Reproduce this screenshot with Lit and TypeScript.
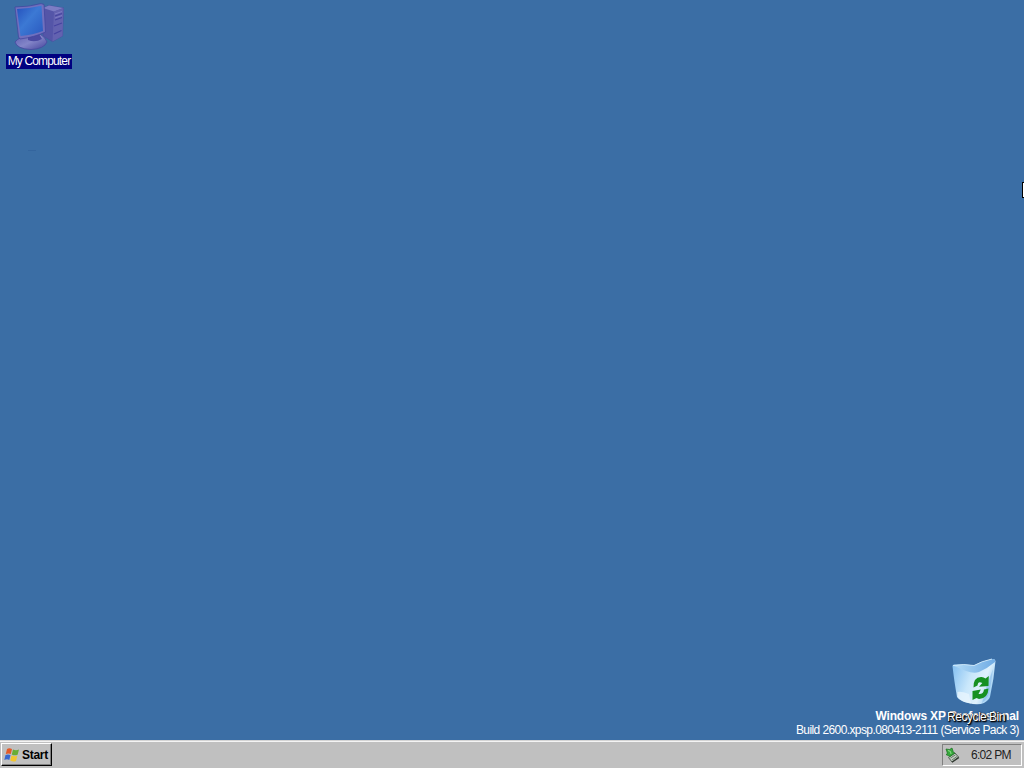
import {LitElement, html, css} from 'lit';
import {customElement, property} from 'lit/decorators.js';

@customElement('computer-icon')
export class ComputerIcon extends LitElement {
  static override styles = css`
    :host, svg {
      display: block;
      width: 50px;
      height: 48px;
    }
  `;

  override render() {
    return html`
      <svg viewBox="0 0 50 48">
        <defs>
          <linearGradient id="screen" x1="0" y1="0" x2="1" y2="1">
            <stop offset="0" stop-color="#2450bd" />
            <stop offset=".45" stop-color="#3c79d4" />
            <stop offset="1" stop-color="#2a59c0" />
          </linearGradient>
          <linearGradient id="base" x1="0" y1="0" x2="1" y2="1">
            <stop offset="0" stop-color="#5a5cb0" />
            <stop offset=".5" stop-color="#8385c8" />
            <stop offset="1" stop-color="#43439b" />
          </linearGradient>
        </defs>
        <path d="M29 5 L35 2.500 L49.500 5 L48.500 33 L38.500 38.500 L29 33Z" fill="#5455a8" stroke="#4a4ba0" stroke-width=".6" />
        <path d="M29 5 L35 2.500 L49.500 5 L40 8.500Z" fill="#7c7dc4" />
        <path d="M40 8.500 L49.500 5 L48.500 33 L38.500 38.500Z" fill="#6362b0" />
        <path d="M41 13 L48 10.500 M41 17 L48 14.500 M40 23 L48 20 M40 31 L47.500 27.500" stroke="#4543a0" stroke-width="1.300" />
        <path d="M41 11 L48 8.500 M41 15 L48 12.500" stroke="#8482cc" stroke-width=".8" />
        <path d="M1 39 Q6 33 15 33 L26 31 Q32 35 33 39 Q30 46 17 46.500 Q3 46 1 39Z" fill="url(#base)" stroke="#4848a0" stroke-width=".8" />
        <path d="M14 34 L25 31 L28 36 Q21 40 14 37Z" fill="#4a4aa2" />
        <path d="M1 4 Q15 4 27 0.600 L30 1.500 L31.500 29 Q21 34 6 36 L4.500 34Z" fill="#7070be" stroke="#41449c" stroke-width=".7" />
        <path d="M3 6 Q16 5.500 27.500 2.800 L29 28 Q19 32 6.500 33Z" fill="url(#screen)" />
      </svg>
    `;
  }
}

@customElement('recycle-icon')
export class RecycleIcon extends LitElement {
  static override styles = css`
    :host, svg {
      display: block;
      width: 48px;
      height: 50px;
    }
  `;

  override render() {
    return html`
      <svg viewBox="0 0 48 50">
        <defs>
          <linearGradient id="glass" x1="0" y1=".3" x2="1" y2=".7">
            <stop offset="0" stop-color="#8cc4f2" />
            <stop offset=".4" stop-color="#c9e7fb" />
            <stop offset=".7" stop-color="#dff1fd" />
            <stop offset="1" stop-color="#8ac4f0" />
          </linearGradient>
          <linearGradient id="inside" x1="0" y1="0" x2="1" y2="0">
            <stop offset="0" stop-color="#b4dcf7" />
            <stop offset="1" stop-color="#6fabe4" />
          </linearGradient>
        </defs>
        <path d="M2.500 9 Q4 23 7 40 Q10 44 18 46 Q28 48.500 34 46 Q39 43 40 40 Q44 22 45.500 4 Q45 1.500 42 2 Q32 4 24 8.500 Q14 7 4 7.500 Q2.500 8 2.500 9Z" fill="url(#glass)" />
        <path d="M3 8.500 Q14 6.500 24 8.500 Q32 4 42 2 Q45.500 1.500 45 5 Q38 11 29 15 Q24 17 16 14 Q9 11 3 8.500Z" fill="url(#inside)" />
        <path d="M3 8.500 Q14 6.500 24 8.500 Q32 4 42 2" fill="none" stroke="#d8effd" stroke-width=".8" />
        <path d="M7.500 35 Q11 34 19 37 L21 46.500 Q11 45 7.500 40Z" fill="#e9f5fd" opacity=".75" />
        <path d="M43 12 Q41 30 38 39 Q36 43 32 46 L37 28Z" fill="#5b9fdd" opacity=".35" />
        <g fill="#169022">
          <path d="M23.500 30.500 Q23 20.500 31 20 Q33.500 19.800 35.500 21.500 L38.800 19 L38.500 29 L29 29.800 L32.300 26 Q28 23.500 27.500 28.500Z" />
          <path d="M38.500 31.500 Q38 41.500 29 42 L26.500 41 L22.500 43 L22.500 34 L30.800 32.500 L28.500 37 Q33.500 37.500 34 32.500Z" />
        </g>
      </svg>
    `;
  }
}

@customElement('task-bar')
export class TaskBar extends LitElement {
  @property() time = '';

  static override styles = css`
    :host {
      box-sizing: border-box;
      display: flex;
      justify-content: space-between;
      height: 28px;
      padding: 2px 2px 2px 1px;
      background: #c0c0c0;
      box-shadow: inset 0 1px #d4d4d4, inset 0 2px #f4f4f4;
      font: 12px 'Liberation Sans', Arial, sans-serif;
      color: #000;
    }

    .start {
      box-sizing: border-box;
      display: flex;
      align-items: center;
      gap: 2px;
      width: 51px;
      height: 23px;
      margin-top: 1px;
      padding: 0 0 0 2px;
      border: 1px solid;
      border-color: #fff #000 #000 #fff;
      box-shadow: inset -1px -1px #808080;
      font-weight: bold;
      letter-spacing: -0.3px;
    }

    .flag {
      flex: none;
      width: 16px;
      height: 16px;
    }

    .tray {
      box-sizing: border-box;
      display: flex;
      align-items: center;
      gap: 10px;
      width: 80px;
      height: 22px;
      margin-top: 2px;
      padding-left: 1px;
      border: 1px solid;
      border-color: #808080 #fff #fff #808080;
      white-space: nowrap;
      letter-spacing: -0.7px;
      color: #222;
    }

    .device {
      flex: none;
      width: 17px;
      height: 17px;
    }
  `;

  override render() {
    return html`
      <div class="start">
        <svg class="flag" viewBox="0 0 16 16">
          <path d="M3 2 Q5 .5 8 2 L6.800 7 Q4.500 5.800 1.800 7Z" fill="#e45a28" />
          <path d="M9 2.500 Q12 4 15 2.500 L13.600 7.800 Q10.500 9 7.800 7.400Z" fill="#68ad36" />
          <path d="M1.500 8 Q4 6.800 6.500 8 L5.300 13 Q3 11.600 .3 13Z" fill="#3868cf" />
          <path d="M7.500 8.500 Q10.500 10 13.300 8.800 L12 14 Q9 15.300 6.300 13.500Z" fill="#f2c62f" />
        </svg>
        <span>Start</span>
      </div>
      <div class="tray">
        <svg class="device" viewBox="0 0 17 17">
          <path d="M4.500 10.500 L11 6 L14.500 10 L8 15Z" fill="#c3cbc3" stroke="#566256" stroke-width="1" />
          <path d="M6.500 11 L11.500 7.800 M8 13 L13 9.500" stroke="#667a66" stroke-width="1" />
          <path d="M8 15.300 L15 10.500" stroke="#303830" stroke-width="1.200" />
          <path d="M2 2 L5.500 2.500 L8 1 L9.500 5.500 L11 6 L6 9.500 L2 7.500 L3.500 6.500Z" fill="#36a83b" stroke="#19711f" stroke-width=".7" />
          <path d="M4 3.500 L6.500 4.500 L7 7" fill="none" stroke="#93dd8c" stroke-width="1" />
        </svg>
        <span>${this.time}</span>
      </div>
    `;
  }
}

@customElement('app-root')
export class AppRoot extends LitElement {
  static override styles = css`
    :host {
      display: flex;
      flex-direction: column;
      width: 1024px;
      height: 768px;
      overflow: hidden;
      font: 12px/14px 'Liberation Sans', Arial, sans-serif;
      color: #fff;
      cursor: default;
    }

    .desktop {
      position: relative;
      flex: 1;
      overflow: hidden;
      background: #3b6ea5;
    }

    .item {
      position: absolute;
      display: flex;
      flex-direction: column;
      align-items: center;
      white-space: nowrap;
    }

    .computer {
      left: 6px;
      top: 3px;
      width: 66px;
    }

    .bin {
      left: 939px;
      top: 657px;
      width: 70px;
    }

    .selected {
      box-sizing: border-box;
      width: 66px;
      height: 15px;
      margin-top: 3px;
      text-align: center;
      background: #000080;
      letter-spacing: -0.85px;
    }

    .shadowed {
      margin-top: 3px;
      padding-left: 4px;
      letter-spacing: -0.5px;
      text-shadow: 1px 1px 1px #000, 1px 1px 2px #000, 0 0 2px #000;
    }

    .version {
      position: absolute;
      right: 5px;
      bottom: 3px;
      text-align: right;
      white-space: nowrap;
    }

    .edition {
      font-weight: bold;
      letter-spacing: -0.15px;
    }

    .build {
      letter-spacing: -0.59px;
    }

    .speck {
      position: absolute;
      left: 28px;
      top: 150px;
      width: 8px;
      height: 1px;
      background: #34659e;
    }

    .pointer {
      position: absolute;
      left: 1022px;
      top: 182px;
      width: 8px;
      height: 16px;
      box-sizing: border-box;
      border: 1px solid #000;
      background: #fff;
    }
  `;

  override render() {
    return html`
      <div class="desktop">
        <div class="item computer">
          <computer-icon></computer-icon>
          <span class="selected">My Computer</span>
        </div>
        <div class="speck"></div>
        <div class="version">
          <div class="edition">Windows XP Professional</div>
          <div class="build">Build 2600.xpsp.080413-2111 (Service Pack 3)</div>
        </div>
        <div class="item bin">
          <recycle-icon></recycle-icon>
          <span class="shadowed">Recycle Bin</span>
        </div>
        <div class="pointer"></div>
      </div>
      <task-bar time="6:02 PM"></task-bar>
    `;
  }
}

declare global {
  interface HTMLElementTagNameMap {
    'computer-icon': ComputerIcon;
    'recycle-icon': RecycleIcon;
    'task-bar': TaskBar;
    'app-root': AppRoot;
  }
}
